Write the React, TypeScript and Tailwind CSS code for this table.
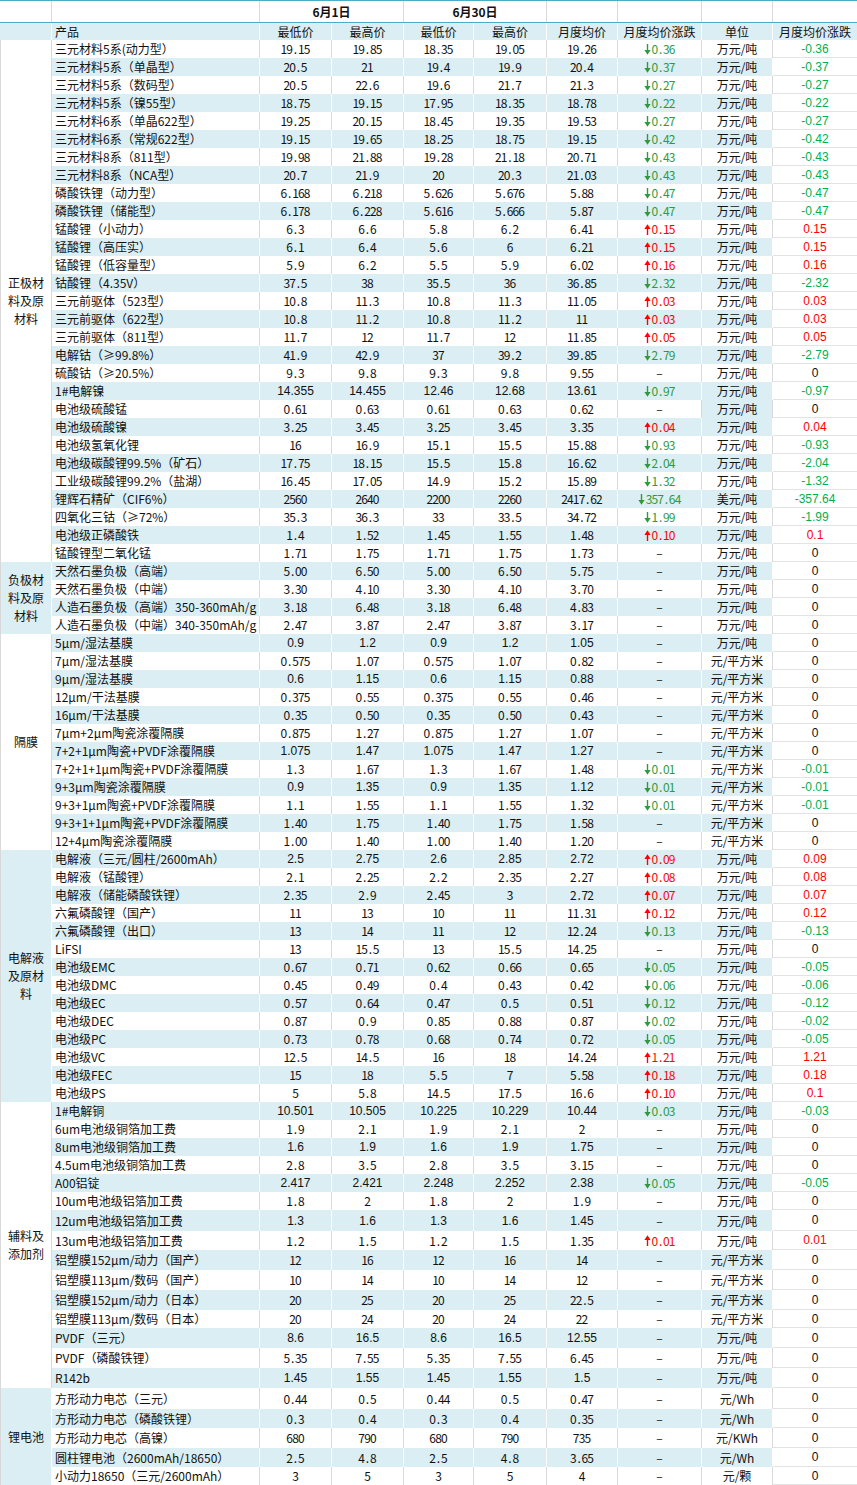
import React from "react";

const CJK = "font-['Noto_Sans_CJK_SC','Noto_Sans',sans-serif]";
const ARIAL = "font-['Liberation_Sans',Arial,sans-serif]";

const T = "万元/吨";
const P = "元/平方米";

type Sec = { label: string[]; blue: boolean; rows: string[] };

const sections: Sec[] = [
  {
    label: ["正极材", "料及原", "材料"],
    blue: false,
    rows: [
      `三元材料5系(动力型）|19.15|19.85|18.35|19.05|19.26|d0.36|${T}|-0.36|`,
      `三元材料5系（单晶型）|20.5|21|19.4|19.9|20.4|d0.37|${T}|-0.37|`,
      `三元材料5系（数码型）|20.5|22.6|19.6|21.7|21.3|d0.27|${T}|-0.27|`,
      `三元材料5系（镍55型）|18.75|19.15|17.95|18.35|18.78|d0.22|${T}|-0.22|`,
      `三元材料6系（单晶622型）|19.25|20.15|18.45|19.35|19.53|d0.27|${T}|-0.27|`,
      `三元材料6系（常规622型）|19.15|19.65|18.25|18.75|19.15|d0.42|${T}|-0.42|`,
      `三元材料8系（811型）|19.98|21.88|19.28|21.18|20.71|d0.43|${T}|-0.43|`,
      `三元材料8系（NCA型）|20.7|21.9|20|20.3|21.03|d0.43|${T}|-0.43|`,
      `磷酸铁锂（动力型）|6.168|6.218|5.626|5.676|5.88|d0.47|${T}|-0.47|`,
      `磷酸铁锂（储能型）|6.178|6.228|5.616|5.666|5.87|d0.47|${T}|-0.47|`,
      `锰酸锂（小动力）|6.3|6.6|5.8|6.2|6.41|u0.15|${T}|0.15|`,
      `锰酸锂（高压实）|6.1|6.4|5.6|6|6.21|u0.15|${T}|0.15|`,
      `锰酸锂（低容量型）|5.9|6.2|5.5|5.9|6.02|u0.16|${T}|0.16|`,
      `钴酸锂（4.35V）|37.5|38|35.5|36|36.85|d2.32|${T}|-2.32|`,
      `三元前驱体（523型）|10.8|11.3|10.8|11.3|11.05|u0.03|${T}|0.03|`,
      `三元前驱体（622型）|10.8|11.2|10.8|11.2|11|u0.03|${T}|0.03|`,
      `三元前驱体（811型）|11.7|12|11.7|12|11.85|u0.05|${T}|0.05|`,
      `电解钴（≥99.8%）|41.9|42.9|37|39.2|39.85|d2.79|${T}|-2.79|`,
      `硫酸钴（≥20.5%）|9.3|9.8|9.3|9.8|9.55||${T}|0|`,
      `1#电解镍|14.355|14.455|12.46|12.68|13.61|d0.97|${T}|-0.97|A`,
      `电池级硫酸锰|0.61|0.63|0.61|0.63|0.62||${T}|0|U`,
      `电池级硫酸镍|3.25|3.45|3.25|3.45|3.35|u0.04|${T}|0.04|`,
      `电池级氢氧化锂|16|16.9|15.1|15.5|15.88|d0.93|${T}|-0.93|`,
      `电池级碳酸锂99.5%（矿石）|17.75|18.15|15.5|15.8|16.62|d2.04|${T}|-2.04|`,
      `工业级碳酸锂99.2%（盐湖）|16.45|17.05|14.9|15.2|15.89|d1.32|${T}|-1.32|`,
      `锂辉石精矿（CIF6%）|2560|2640|2200|2260|2417.62|d357.64|美元/吨|-357.64|`,
      `四氧化三钴（≥72%）|35.3|36.3|33|33.5|34.72|d1.99|${T}|-1.99|`,
      `电池级正磷酸铁|1.4|1.52|1.45|1.55|1.48|u0.10|${T}|0.1|`,
      `锰酸锂型二氧化锰|1.71|1.75|1.71|1.75|1.73||${T}|0|`,
    ],
  },
  {
    label: ["负极材", "料及原", "材料"],
    blue: true,
    rows: [
      `天然石墨负极（高端）|5.00|6.50|5.00|6.50|5.75||${T}|0|`,
      `天然石墨负极（中端）|3.30|4.10|3.30|4.10|3.70||${T}|0|`,
      `人造石墨负极（高端）350-360mAh/g|3.18|6.48|3.18|6.48|4.83||${T}|0|`,
      `人造石墨负极（中端）340-350mAh/g|2.47|3.87|2.47|3.87|3.17||${T}|0|`,
    ],
  },
  {
    label: ["隔膜"],
    blue: false,
    rows: [
      `5μm/湿法基膜|0.9|1.2|0.9|1.2|1.05||${T}|0|A`,
      `7μm/湿法基膜|0.575|1.07|0.575|1.07|0.82||${P}|0|`,
      `9μm/湿法基膜|0.6|1.15|0.6|1.15|0.88||${P}|0|A`,
      `12μm/干法基膜|0.375|0.55|0.375|0.55|0.46||${P}|0|`,
      `16μm/干法基膜|0.35|0.50|0.35|0.50|0.43||${P}|0|`,
      `7μm+2μm陶瓷涂覆隔膜|0.875|1.27|0.875|1.27|1.07||${P}|0|`,
      `7+2+1μm陶瓷+PVDF涂覆隔膜|1.075|1.47|1.075|1.47|1.27||${P}|0|A`,
      `7+2+1+1μm陶瓷+PVDF涂覆隔膜|1.3|1.67|1.3|1.67|1.48|d0.01|${P}|-0.01|`,
      `9+3μm陶瓷涂覆隔膜|0.9|1.35|0.9|1.35|1.12|d0.01|${P}|-0.01|A`,
      `9+3+1μm陶瓷+PVDF涂覆隔膜|1.1|1.55|1.1|1.55|1.32|d0.01|${P}|-0.01|`,
      `9+3+1+1μm陶瓷+PVDF涂覆隔膜|1.40|1.75|1.40|1.75|1.58||${P}|0|`,
      `12+4μm陶瓷涂覆隔膜|1.00|1.40|1.00|1.40|1.20||${P}|0|`,
    ],
  },
  {
    label: ["电解液", "及原材", "料"],
    blue: true,
    rows: [
      `电解液（三元/圆柱/2600mAh）|2.5|2.75|2.6|2.85|2.72|u0.09|${T}|0.09|A`,
      `电解液（锰酸锂）|2.1|2.25|2.2|2.35|2.27|u0.08|${T}|0.08|`,
      `电解液（储能磷酸铁锂）|2.35|2.9|2.45|3|2.72|u0.07|${T}|0.07|`,
      `六氟磷酸锂（国产）|11|13|10|11|11.31|u0.12|${T}|0.12|`,
      `六氟磷酸锂（出口）|13|14|11|12|12.24|d0.13|${T}|-0.13|`,
      `LiFSI|13|15.5|13|15.5|14.25||${T}|0|`,
      `电池级EMC|0.67|0.71|0.62|0.66|0.65|d0.05|${T}|-0.05|`,
      `电池级DMC|0.45|0.49|0.4|0.43|0.42|d0.06|${T}|-0.06|`,
      `电池级EC|0.57|0.64|0.47|0.5|0.51|d0.12|${T}|-0.12|`,
      `电池级DEC|0.87|0.9|0.85|0.88|0.87|d0.02|${T}|-0.02|`,
      `电池级PC|0.73|0.78|0.68|0.74|0.72|d0.05|${T}|-0.05|`,
      `电池级VC|12.5|14.5|16|18|14.24|u1.21|${T}|1.21|`,
      `电池级FEC|15|18|5.5|7|5.58|u0.18|${T}|0.18|`,
      `电池级PS|5|5.8|14.5|17.5|16.6|u0.10|${T}|0.1|`,
    ],
  },
  {
    label: ["辅料及", "添加剂"],
    blue: false,
    rows: [
      `1#电解铜|10.501|10.505|10.225|10.229|10.44|d0.03|${T}|-0.03|A`,
      `6um电池级铜箔加工费|1.9|2.1|1.9|2.1|2||${T}|0|`,
      `8um电池级铜箔加工费|1.6|1.9|1.6|1.9|1.75||${T}|0|A`,
      `4.5um电池级铜箔加工费|2.8|3.5|2.8|3.5|3.15||${T}|0|`,
      `A00铝锭|2.417|2.421|2.248|2.252|2.38|d0.05|${T}|-0.05|A`,
      `10um电池级铝箔加工费|1.8|2|1.8|2|1.9||${T}|0|`,
      `12um电池级铝箔加工费|1.3|1.6|1.3|1.6|1.45||${T}|0|A`,
      `13um电池级铝箔加工费|1.2|1.5|1.2|1.5|1.35|u0.01|${T}|0.01|`,
      `铝塑膜152μm/动力（国产）|12|16|12|16|14||${P}|0|`,
      `铝塑膜113μm/数码（国产）|10|14|10|14|12||${P}|0|`,
      `铝塑膜152μm/动力（日本）|20|25|20|25|22.5||${P}|0|`,
      `铝塑膜113μm/数码（日本）|20|24|20|24|22||${P}|0|`,
      `PVDF（三元）|8.6|16.5|8.6|16.5|12.55||${T}|0|A`,
      `PVDF（磷酸铁锂）|5.35|7.55|5.35|7.55|6.45||${T}|0|`,
      `R142b|1.45|1.55|1.45|1.55|1.5||${T}|0|A`,
    ],
  },
  {
    label: ["锂电池"],
    blue: true,
    rows: [
      `方形动力电芯（三元）|0.44|0.5|0.44|0.5|0.47||元/Wh|0|`,
      `方形动力电芯（磷酸铁锂）|0.3|0.4|0.3|0.4|0.35||元/Wh|0|`,
      `方形动力电芯（高镍）|680|790|680|790|735||元/KWh|0|`,
      `圆柱锂电池（2600mAh/18650）|2.5|4.8|2.5|4.8|3.65||元/Wh|0|`,
      `小动力18650（三元/2600mAh）|3|5|3|5|4||元/颗|0|`,
    ],
  },
];

// heights of rows 66..79 (1-based); earlier rows are 18px
const lateHeights = [21, 19, 20, 20, 20, 18, 20, 20, 20, 21, 19, 20, 19, 18];
const hClass: Record<number, string> = {
  18: "h-[18px]",
  19: "h-[19px]",
  20: "h-[20px]",
  21: "h-[21px]",
};

const NUMW = ["w-[72px]", "w-[72px]", "w-[70px]", "w-[73px]", "w-[71px]"];

// half-width (SimSun-like) number rendering: each character in an equal cell
function Half({ v }: { v: string }) {
  return (
    <span className={`inline-flex ${CJK} text-[12px] leading-none`}>
      {v.split("").map((ch, i) => (
        <span key={i} className="w-[5.8px] flex justify-center">
          {ch}
        </span>
      ))}
    </span>
  );
}

function Arrow({ up }: { up: boolean }) {
  return (
    <svg width="7" height="11" viewBox="0 0 7 11" className="mr-[1px] shrink-0">
      {up ? (
        <>
          <path d="M3.5 4V11" stroke="currentColor" strokeWidth="1.4" />
          <path d="M0.4 5L3.5 0.3L6.6 5Z" fill="currentColor" />
        </>
      ) : (
        <>
          <path d="M3.5 0V7" stroke="currentColor" strokeWidth="1.4" />
          <path d="M0.4 6L3.5 10.7L6.6 6Z" fill="currentColor" />
        </>
      )}
    </svg>
  );
}

function Row({ line, idx }: { line: string; idx: number }) {
  const [name, a, b, c, d, avg, chg, unit, last, flags] = line.split("|");
  const blue = idx % 2 === 1;
  const h = idx >= 65 ? lateHeights[idx - 65] : 18;
  const bg = blue ? "bg-[#daeef3]" : "bg-white";
  const bc = blue ? "border-white" : "border-[#d9d9d9]";
  const arial = flags.includes("A");
  const unitBlue = blue || flags.includes("U");
  const lastNum = parseFloat(last);
  const lastColor =
    lastNum < 0 ? "text-[#00b050]" : lastNum > 0 ? "text-[#ff0000]" : "text-[#111]";
  const up = chg.startsWith("u");
  return (
    <div className={`flex ${hClass[h]}`}>
      <div
        className={`w-[208px] ${bg} ${bc} border-r flex items-center pl-[3px] whitespace-nowrap overflow-hidden ${CJK} text-[12px] leading-none text-[#111]`}
      >
        {name}
      </div>
      {[a, b, c, d, avg].map((v, i) => (
        <div
          key={i}
          className={`${NUMW[i]} ${bg} ${bc} border-r flex items-center justify-center leading-none text-[#111]`}
        >
          {arial ? <span className={`${ARIAL} text-[12px]`}>{v}</span> : <Half v={v} />}
        </div>
      ))}
      <div
        className={`w-[84px] ${bg} ${bc} border-r flex items-center justify-center leading-none`}
      >
        {chg ? (
          <span
            className={`flex items-center ${up ? "text-[#ff0000]" : "text-[#2f9a3c]"}`}
          >
            <Arrow up={up} />
            <Half v={chg.slice(1)} />
          </span>
        ) : (
          <span className={`${CJK} text-[12px] text-[#111]`}>–</span>
        )}
      </div>
      <div
        className={`w-[71px] ${unitBlue ? "bg-[#daeef3]" : "bg-white"} ${bc} border-r flex items-center justify-center ${CJK} text-[12px] leading-none text-[#111]`}
      >
        {unit}
      </div>
      <div
        className={`w-[84px] bg-white border-b border-[#e3e3e3] flex items-center justify-center ${ARIAL} text-[12px] leading-none ${lastColor}`}
      >
        {last}
      </div>
    </div>
  );
}

export default function App() {
  let counter = 0;
  return (
    <div className={`w-[857px] bg-white ${CJK} text-[#111]`}>
      {/* header row 1 */}
      <div className="flex h-[23px] border-t border-b border-[#4bacc6]">
        <div className="w-[52px] border-r border-[#d9d9d9]" />
        <div className="w-[208px] border-r border-[#d9d9d9]" />
        <div className="w-[144px] border-r border-[#d9d9d9] flex items-center justify-center text-[12px] font-bold leading-none">
          6月1日
        </div>
        <div className="w-[143px] border-r border-[#d9d9d9] flex items-center justify-center text-[12px] font-bold leading-none">
          6月30日
        </div>
        <div className="w-[71px] border-r border-[#d9d9d9]" />
        <div className="w-[84px] border-r border-[#d9d9d9]" />
        <div className="w-[71px] border-r border-[#d9d9d9]" />
        <div className="w-[84px]" />
      </div>
      {/* header row 2 */}
      <div className="flex h-[17px] bg-[#daeef3] text-[12px] leading-none">
        <div className="w-[52px] border-r border-white" />
        <div className="w-[208px] border-r border-white flex items-center pl-[3px]">产品</div>
        <div className="w-[72px] border-r border-white flex items-center justify-center">最低价</div>
        <div className="w-[72px] border-r border-white flex items-center justify-center">最高价</div>
        <div className="w-[70px] border-r border-white flex items-center justify-center">最低价</div>
        <div className="w-[73px] border-r border-white flex items-center justify-center">最高价</div>
        <div className="w-[71px] border-r border-white flex items-center justify-center">月度均价</div>
        <div className="w-[84px] border-r border-white flex items-center justify-center">月度均价涨跌</div>
        <div className="w-[71px] border-r border-white flex items-center justify-center">单位</div>
        <div className="w-[84px] flex items-center justify-center">月度均价涨跌</div>
      </div>
      {sections.map((s, si) => (
        <div key={si} className="flex">
          <div
            className={`w-[52px] border-l border-r ${
              s.blue ? "bg-[#daeef3] border-l-[#d9d9d9] border-r-white" : "bg-white border-[#d9d9d9]"
            } flex flex-col items-center justify-center text-[12px] leading-[18px] text-[#111]`}
          >
            {s.label.map((l, li) => (
              <div key={li}>{l}</div>
            ))}
          </div>
          <div className="flex flex-col">
            {s.rows.map((r) => {
              const idx = counter++;
              return <Row key={idx} line={r} idx={idx} />;
            })}
          </div>
        </div>
      ))}
    </div>
  );
}
